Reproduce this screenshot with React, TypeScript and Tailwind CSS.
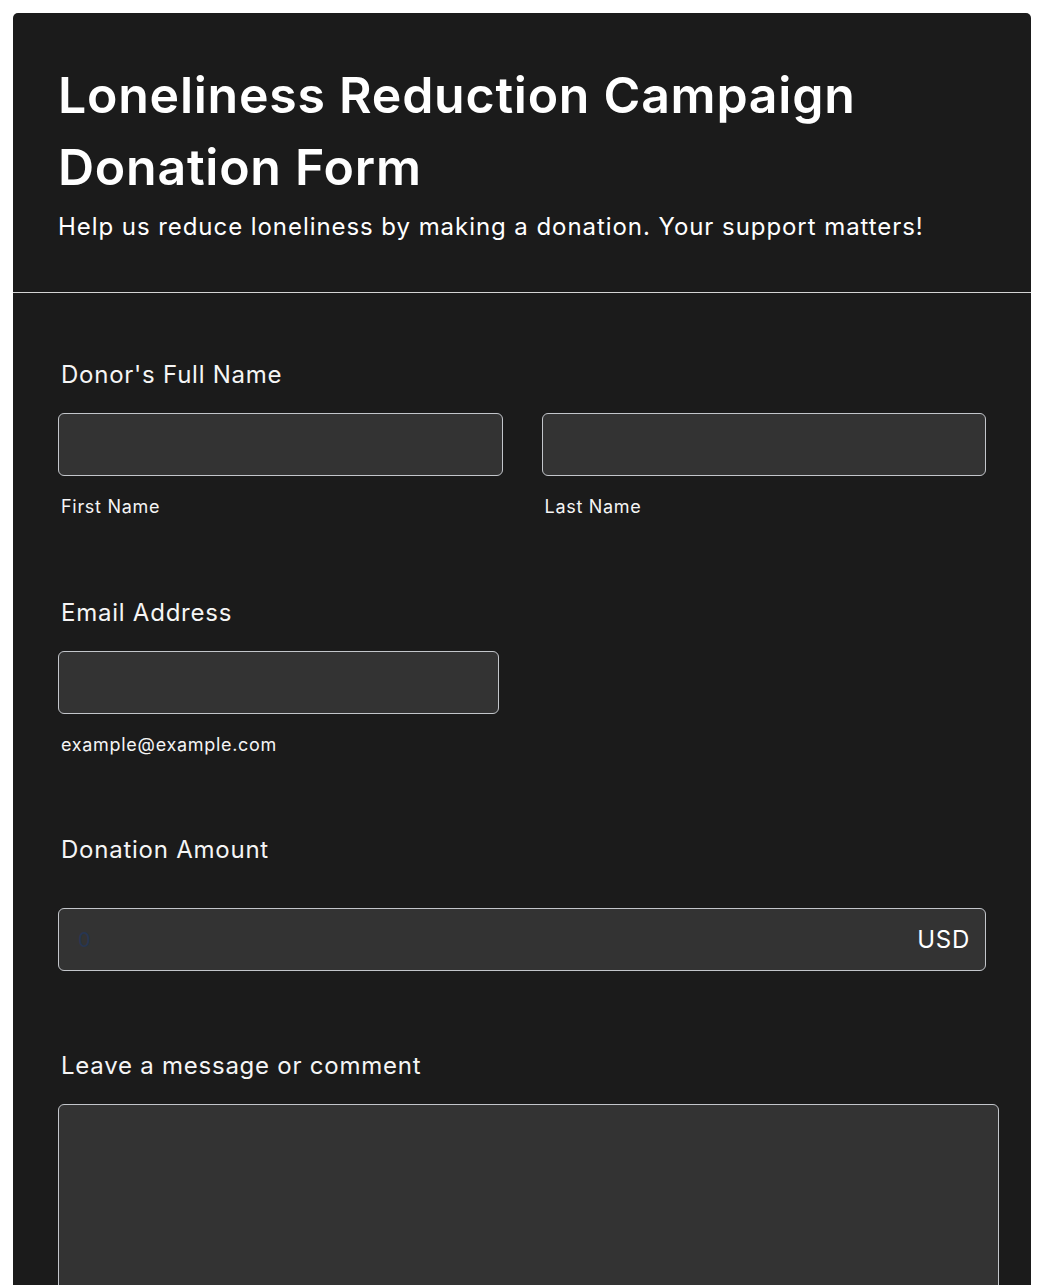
import React from "react";

const font = { fontFamily: "Inter, 'Noto Sans', sans-serif" };

export default function App() {
  return (
    <div className="min-h-[1285px] bg-white pt-[13px] px-[13px]" style={font}>
      <div className="w-[1018px] bg-[#1b1b1b] rounded-t-[5px] text-[#f5f5f5]">
        <div className="px-[45px] pt-[46px] pb-[49px]">
          <h1 className="text-[50px] leading-[72px] font-semibold tracking-[0.76px] text-white">
            Loneliness Reduction Campaign Donation Form
          </h1>
          <p className="mt-[8px] text-[24px] leading-[32px] tracking-[0.94px] text-white">
            Help us reduce loneliness by making a donation. Your support matters!
          </p>
        </div>
        <div className="h-px bg-[#d4d4d4]" />
        <div className="px-[45px] pt-[66px] pb-[40px]">
          <div className="pl-[3px] text-[24px] leading-[32px] tracking-[0.76px]">Donor's Full Name</div>
          <div className="mt-[22px] grid grid-cols-2 gap-[39px]">
            <div>
              <div className="h-[63px] rounded-[6px] border border-[#c3c6cb] bg-[#333333]" />
              <div className="mt-[19px] pl-[3px] text-[18px] leading-[24px] tracking-[0.7px]">First Name</div>
            </div>
            <div>
              <div className="h-[63px] rounded-[6px] border border-[#c3c6cb] bg-[#333333]" />
              <div className="mt-[19px] pl-[3px] text-[18px] leading-[24px] tracking-[0.7px]">Last Name</div>
            </div>
          </div>

          <div className="mt-[78px] pl-[3px] text-[24px] leading-[32px] tracking-[0.76px]">Email Address</div>
          <div className="mt-[22px] w-[441px] h-[63px] rounded-[6px] border border-[#c3c6cb] bg-[#333333]" />
          <div className="mt-[19px] pl-[3px] text-[18px] leading-[24px] tracking-[0.7px]">example@example.com</div>

          <div className="mt-[77px] pl-[3px] text-[24px] leading-[32px] tracking-[0.76px]">Donation Amount</div>
          <div className="mt-[42px] h-[63px] rounded-[6px] border border-[#c3c6cb] bg-[#333333] flex items-center justify-between pl-[19px] pr-[15px]">
            <span className="text-[20px] text-[#263652]">0</span>
            <span className="text-[24px] tracking-[0.76px] text-white">USD</span>
          </div>

          <div className="mt-[79px] pl-[3px] text-[24px] leading-[32px] tracking-[0.76px]">Leave a message or comment</div>
          <div className="mt-[22px] w-[941px] h-[200px] rounded-[6px] border border-[#c3c6cb] bg-[#333333]" />
        </div>
      </div>
    </div>
  );
}
